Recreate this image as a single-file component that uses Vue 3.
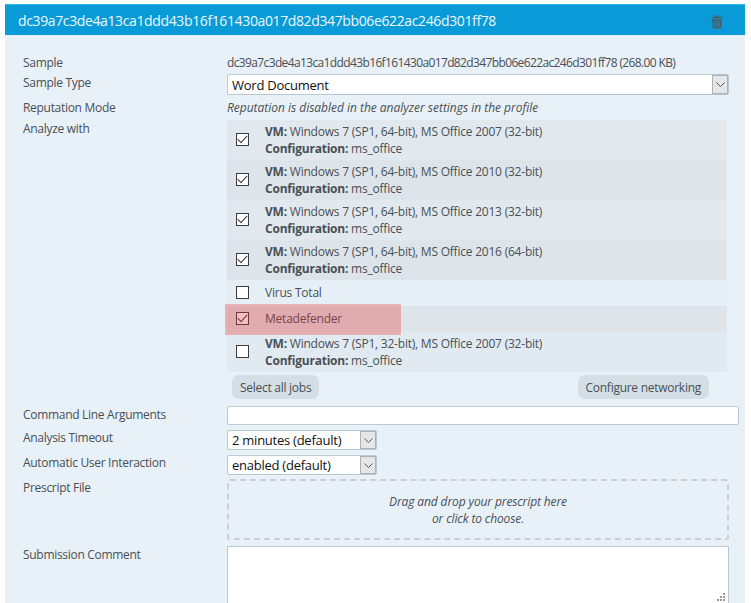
<template>
  <div class="page">
    <section class="panel">
      <header class="panel__head">
        <span class="panel__title">{{ hash }}</span>
        <svg class="trash" width="12" height="14" viewBox="0 0 14 15">
          <path d="M4.5 0h5v1.6h4v1.6H.5V1.6h4z" fill="#4e5d66" />
          <path d="M1.2 4.2h11.6L11.8 15H2.2z" fill="#4e5d66" />
          <path d="M4.4 6v7M7 6v7M9.6 6v7" stroke="#089bd7" stroke-width="1" />
        </svg>
      </header>

      <div class="panel__body">
        <div class="row row--sample">
          <label>Sample</label>
          <div class="value value--hash">{{ hash }} (268.00 KB)</div>
        </div>

        <div class="row row--type">
          <label>Sample Type</label>
          <div class="select select--wide">
            <span>Word Document</span>
            <i class="select__arrow">
              <svg width="9" height="5" viewBox="0 0 9 5"><path d="M.5.5l4 4 4-4" fill="none" stroke="#555" /></svg>
            </i>
          </div>
        </div>

        <div class="row row--rep">
          <label>Reputation Mode</label>
          <div class="value value--note">Reputation is disabled in the analyzer settings in the profile</div>
        </div>

        <div class="row row--jobs">
          <label>Analyze with</label>
          <div class="jobs-wrap">
            <ul class="jobs">
              <li v-for="(job, index) in jobs" :key="index" class="job" :class="{ 'job--small': !job.vm }">
                <span class="check">
                  <svg v-if="job.checked" width="11" height="9" viewBox="0 0 11 9">
                    <path d="M.8 4.2l3.2 3.4L10.2.8" fill="none" stroke="#444" stroke-width="1.1" />
                  </svg>
                </span>
                <div class="job__text">
                  <template v-if="job.vm">
                    <div><b>VM:</b> {{ job.vm }}</div>
                    <div><b>Configuration:</b> ms_office</div>
                  </template>
                  <div v-else>{{ job.name }}</div>
                </div>
              </li>
            </ul>
            <div class="flag"></div>
            <div class="jobs__actions">
              <button class="btn">Select all jobs</button>
              <button class="btn">Configure networking</button>
            </div>
          </div>
        </div>

        <div class="row row--args">
          <label>Command Line Arguments</label>
          <input class="input" type="text" />
        </div>

        <div class="row row--timeout">
          <label>Analysis Timeout</label>
          <div class="select select--small">
            <span>2 minutes (default)</span>
            <i class="select__arrow">
              <svg width="9" height="5" viewBox="0 0 9 5"><path d="M.5.5l4 4 4-4" fill="none" stroke="#555" /></svg>
            </i>
          </div>
        </div>

        <div class="row row--auto">
          <label>Automatic User Interaction</label>
          <div class="select select--small">
            <span>enabled (default)</span>
            <i class="select__arrow">
              <svg width="9" height="5" viewBox="0 0 9 5"><path d="M.5.5l4 4 4-4" fill="none" stroke="#555" /></svg>
            </i>
          </div>
        </div>

        <div class="row row--prescript">
          <label>Prescript File</label>
          <div class="drop">
            <div>Drag and drop your prescript here</div>
            <div>or click to choose.</div>
          </div>
        </div>

        <div class="row row--comment">
          <label>Submission Comment</label>
          <div class="comment">
            <svg class="grip" width="9" height="9" viewBox="0 0 9 9">
              <path d="M7 1h2v2H7zM4 4h2v2H4zM7 4h2v2H7zM1 7h2v2H1zM4 7h2v2H4zM7 7h2v2H7z" fill="#9a9a9a" />
            </svg>
          </div>
        </div>
      </div>
    </section>
  </div>
</template>

<script setup>
const hash = 'dc39a7c3de4a13ca1ddd43b16f161430a017d82d347bb06e622ac246d301ff78'

const jobs = [
  { vm: 'Windows 7 (SP1, 64-bit), MS Office 2007 (32-bit)', checked: true },
  { vm: 'Windows 7 (SP1, 64-bit), MS Office 2010 (32-bit)', checked: true },
  { vm: 'Windows 7 (SP1, 64-bit), MS Office 2013 (32-bit)', checked: true },
  { vm: 'Windows 7 (SP1, 64-bit), MS Office 2016 (64-bit)', checked: true },
  { name: 'Virus Total', checked: false },
  { name: 'Metadefender', checked: true },
  { vm: 'Windows 7 (SP1, 32-bit), MS Office 2007 (32-bit)', checked: false }
]
</script>

<style>
html,
body {
  margin: 0;
  background: #fff;
}
</style>

<style scoped>
.page {
  height: 603px;
  overflow: hidden;
  padding: 4px 6px 0 5px;
  box-sizing: border-box;
  font-family: "Open Sans", sans-serif;
  font-size: 12px;
  letter-spacing: -0.3px;
  color: #4a4f55;
}

.panel__head {
  height: 31px;
  box-sizing: border-box;
  border-top: 1px solid #2fb4e6;
  background: #089bd7;
  display: flex;
  align-items: center;
  justify-content: space-between;
  padding: 0 22px 0 13px;
}

.panel__title {
  color: #eef8fc;
  font-size: 14px;
  letter-spacing: -0.375px;
}

.trash {
  margin-top: 4px;
}

.panel__body {
  background: #e8f1f7;
  height: 568px;
  padding-top: 17px;
  box-sizing: border-box;
}

/* rows */
.row {
  display: grid;
  grid-template-columns: 204px 1fr;
  padding-left: 18px;
}

.row label {
  line-height: 17px;
}

.value {
  line-height: 17px;
}

.value--hash {
  letter-spacing: -0.63px;
}

.value--note {
  font-style: italic;
  letter-spacing: -0.02px;
}

.row--sample { height: 18px; margin-top: 2px; }
.row--type { height: 21px; margin-top: 2px; }
.row--rep { margin-top: 4px; height: 21px; }
.row--args { margin-top: 7px; height: 19px; }
.row--timeout { margin-top: 5px; height: 20px; }
.row--timeout label { margin-top: -1px; }
.row--auto { margin-top: 5px; height: 20px; }
.row--auto label { margin-top: -1px; }
.row--prescript { margin-top: 4px; height: 61px; }
.row--comment { margin-top: 6px; }

/* selects */
.select {
  height: 21px;
  box-sizing: border-box;
  background: #fff;
  border: 1px solid #bcc8cf;
  border-radius: 2px;
  display: flex;
  align-items: center;
  justify-content: space-between;
  padding-left: 4px;
  color: #111;
  font-size: 13px;
  letter-spacing: -0.25px;
}

.select--wide {
  width: 502px;
}

.select--small {
  width: 150px;
  height: 20px;
}

.select__arrow {
  width: 16px;
  height: 100%;
  box-sizing: border-box;
  border: 1px solid #aab2b7;
  background: #e4e6e8;
  display: flex;
  align-items: center;
  justify-content: center;
}

/* jobs */
.jobs-wrap {
  position: relative;
  width: 500px;
}

.jobs {
  list-style: none;
  margin: 0;
  padding: 0;
}

.job {
  height: 40px;
  display: flex;
  align-items: center;
  box-sizing: border-box;
  background: #e1e9ef;
}

.job:nth-child(even) {
  background: #dde5eb;
}

.job:nth-child(5) {
  background: #e6eff5;
}

.job--small {
  height: 26px;
}

.job--small .job__text {
  margin-top: -2px;
}

.job:nth-child(7) {
  background: #e1eaf0;
}

.check {
  width: 13px;
  height: 13px;
  box-sizing: border-box;
  margin: 0 0 1px 9px;
  border: 1px solid #3c3c3c;
  background: #fff;
  display: flex;
  align-items: center;
  justify-content: center;
  flex: none;
}

.job__text {
  margin-left: 16px;
  line-height: 17px;
  letter-spacing: -0.22px;
}

.job__text b {
  font-weight: 700;
}

.flag {
  position: absolute;
  left: -2px;
  top: 184px;
  width: 176px;
  height: 31px;
  background: rgba(235, 40, 40, 0.3);
}

.jobs__actions {
  display: flex;
  justify-content: space-between;
  padding: 3px 18px 0 5px;
}

.btn {
  height: 24px;
  padding: 0 8px;
  border: 0;
  border-radius: 7px;
  background: #d3dfe4;
  color: #4a4f55;
  font: 12px "Open Sans", sans-serif;
  letter-spacing: -0.27px;
}

/* inputs */
.input {
  width: 512px;
  height: 19px;
  box-sizing: border-box;
  border: 1px solid #bcc8cf;
  border-radius: 2px;
  background: #fff;
  padding: 0;
}

.drop {
  width: 502px;
  height: 61px;
  box-sizing: border-box;
  border: 2px dashed #c9cfd2;
  border-radius: 3px;
  display: flex;
  flex-direction: column;
  align-items: center;
  justify-content: center;
  font-style: italic;
  line-height: 17px;
  letter-spacing: -0.12px;
}

.comment {
  position: relative;
  width: 502px;
  height: 60px;
  box-sizing: border-box;
  background: #fff;
  border: 1px solid #bcc8cf;
}

.grip {
  position: absolute;
  right: 3px;
  bottom: 4px;
}
</style>
